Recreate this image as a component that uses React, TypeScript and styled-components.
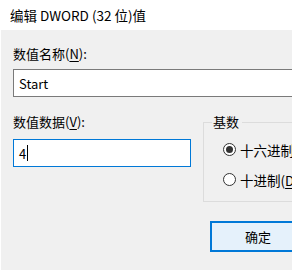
import React from "react";
import styled, { createGlobalStyle } from "styled-components";

const GlobalStyle = createGlobalStyle`
	html, body {
		margin: 0;
		padding: 0;
		background: #ffffff;
		overflow: hidden;
	}
	body {
		font-family: "Noto Sans CJK SC", "Noto Sans", sans-serif;
		color: #000000;
	}
`;

const StyledWindow = styled.div`
	width: 292px;
	height: 270px;
	display: flex;
	flex-direction: column;
	background-color: #ffffff;
`;

const StyledTitleBar = styled.div`
	height: 30px;
	padding-left: 10px;
	display: flex;
	align-items: center;
	font-size: 13.5px;
	white-space: nowrap;
`;

const StyledBody = styled.div`
	flex: 1;
	margin-left: 1px;
	background-color: #f0f0f0;
	padding: 14px 0 0 12px;
	font-size: 13px;
	display: flex;
	flex-direction: column;
	overflow: hidden;
`;

const StyledLabel = styled.div`
	line-height: 20px;
	white-space: nowrap;
`;

const StyledKey = styled.span`
	text-decoration: underline;
	text-underline-offset: 2px;
`;

const StyledInput = styled.div<{ $focused?: boolean; $width: number }>`
	box-sizing: border-box;
	width: ${(p) => p.$width}px;
	height: 28px;
	margin-top: ${(p) => (p.$focused ? 7 : 5)}px;
	padding-left: 5px;
	display: flex;
	align-items: center;
	background-color: #ffffff;
	border: 1px solid ${(p) => (p.$focused ? "#0078d7" : "#7a7a7a")};
	font-size: 13px;
	flex-shrink: 0;
`;

const StyledCaret = styled.span`
	display: inline-block;
	width: 1px;
	height: 16px;
	margin-left: 1px;
	background-color: #000000;
`;

const StyledRow = styled.div`
	display: flex;
	margin-top: 15px;
`;

const StyledColumn = styled.div`
	display: flex;
	flex-direction: column;
	width: 178px;
`;

const StyledGroup = styled.fieldset`
	box-sizing: border-box;
	margin: 2px 0 0 12px;
	padding: 10px 0 0 19px;
	width: 120px;
	height: 88px;
	border: 1px solid #dcdcdc;
	border-right: none;
	flex-shrink: 0;
	display: flex;
	flex-direction: column;
	gap: 11px;

	& legend {
		padding: 0 3px 0 1px;
		margin-left: -11px;
		line-height: 16px;
		font-size: 13px;
	}
`;

const StyledRadio = styled.div`
	display: flex;
	align-items: center;
	gap: 4px;
	height: 19px;
	white-space: nowrap;
	font-size: 13.5px;
`;

const StyledRadioCircle = styled.span<{ $checked?: boolean }>`
	box-sizing: border-box;
	width: 13px;
	height: 13px;
	border-radius: 50%;
	border: 1px solid #333333;
	background-color: #ffffff;
	display: flex;
	align-items: center;
	justify-content: center;
	flex-shrink: 0;

	&::after {
		content: "";
		width: 7px;
		height: 7px;
		border-radius: 50%;
		background-color: ${(p) => (p.$checked ? "#333333" : "transparent")};
	}
`;

const StyledButtonRow = styled.div`
	display: flex;
	margin-top: 19px;
	padding-left: 197px;
`;

const StyledButton = styled.button`
	box-sizing: border-box;
	width: 96px;
	height: 31px;
	flex-shrink: 0;
	border: 2px solid #0078d7;
	background-color: #e5f1fb;
	font-family: "Noto Sans CJK SC", "Noto Sans", sans-serif;
	font-size: 13px;
	color: #000000;
	padding: 0;
`;

const App: React.FC = () => {
	return (
		<StyledWindow>
			<GlobalStyle />
			<StyledTitleBar>编辑 DWORD (32 位)值</StyledTitleBar>
			<StyledBody>
				<StyledLabel>
					数值名称(<StyledKey>N</StyledKey>):
				</StyledLabel>
				<StyledInput $width={320}>Start</StyledInput>
				<StyledRow>
					<StyledColumn>
						<StyledLabel>
							数值数据(<StyledKey>V</StyledKey>):
						</StyledLabel>
						<StyledInput $focused $width={178}>
							4
							<StyledCaret />
						</StyledInput>
					</StyledColumn>
					<StyledGroup>
						<legend>基数</legend>
						<StyledRadio>
							<StyledRadioCircle $checked />
							<span>
								十六进制(<StyledKey>H</StyledKey>)
							</span>
						</StyledRadio>
						<StyledRadio>
							<StyledRadioCircle />
							<span>
								十进制(<StyledKey>D</StyledKey>)
							</span>
						</StyledRadio>
					</StyledGroup>
				</StyledRow>
				<StyledButtonRow>
					<StyledButton>确定</StyledButton>
				</StyledButtonRow>
			</StyledBody>
		</StyledWindow>
	);
};

export default App;
